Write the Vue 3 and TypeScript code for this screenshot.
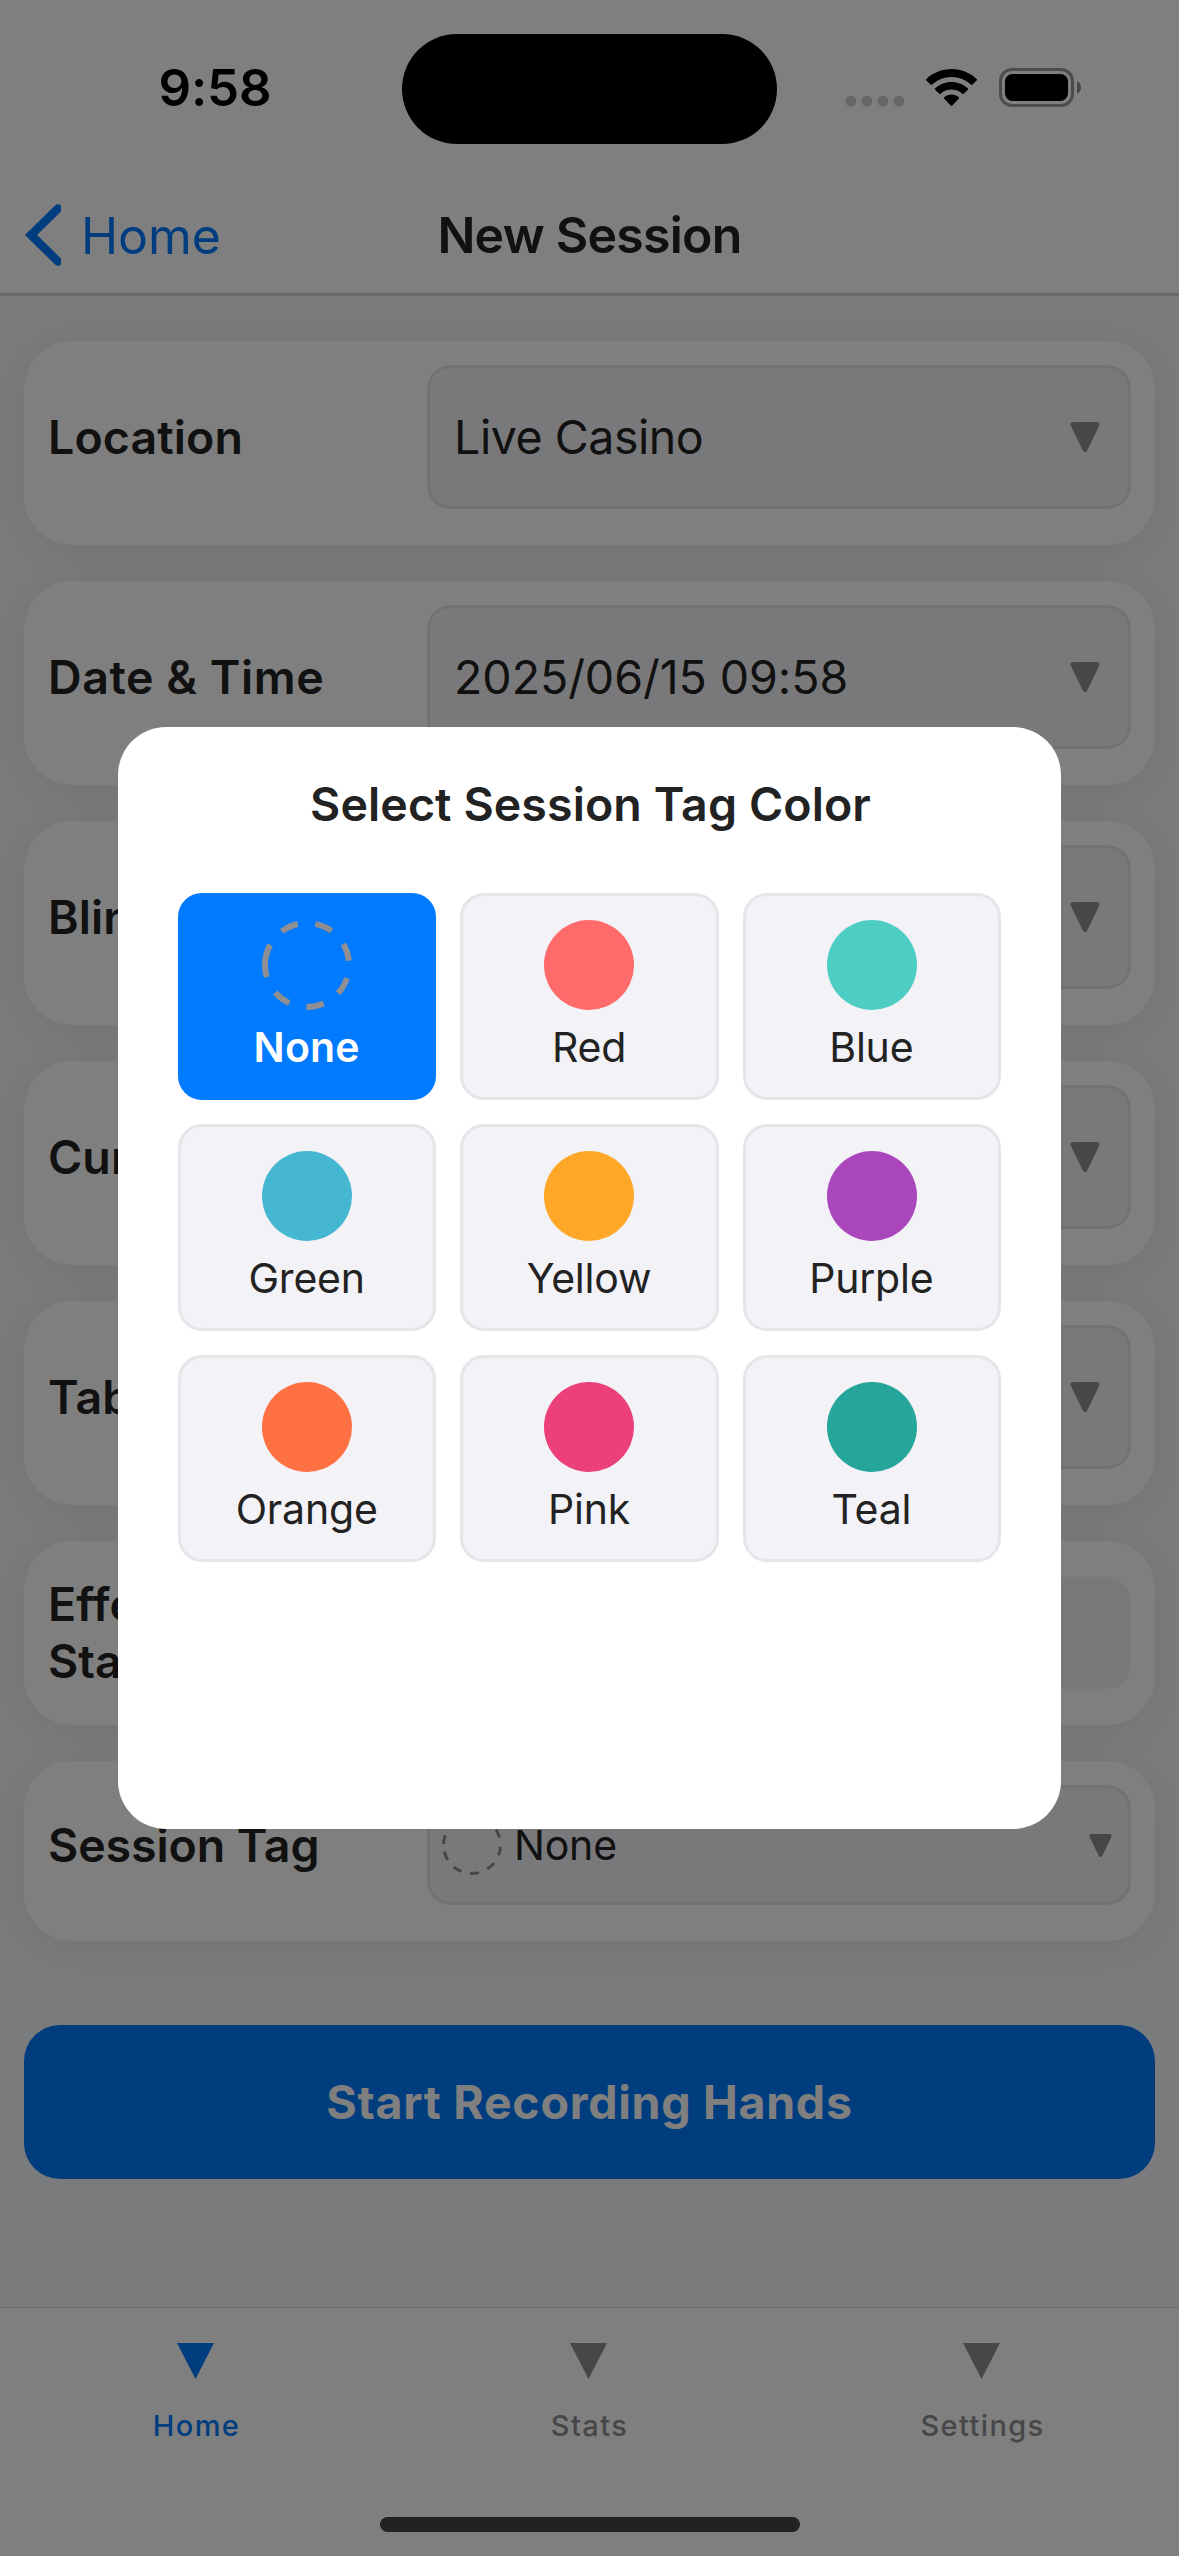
<script setup lang="ts">
interface Field {
  label: string
  value: string
  kind: 'select' | 'input' | 'tag'
  wide?: boolean
}

interface TagColor {
  name: string
  color: string | null
}

const fields: Field[] = [
  { label: 'Location', value: 'Live Casino', kind: 'select' },
  { label: 'Date & Time', value: '2025/06/15 09:58', kind: 'select', wide: true },
  { label: 'Blinds', value: '', kind: 'select' },
  { label: 'Currency', value: '', kind: 'select' },
  { label: 'Table Size', value: '', kind: 'select' },
  { label: 'Effective Stack', value: '', kind: 'input' },
  { label: 'Session Tag', value: 'None', kind: 'tag' },
]

const colors: TagColor[] = [
  { name: 'None', color: null },
  { name: 'Red', color: '#ff6b6b' },
  { name: 'Blue', color: '#4ecdc4' },
  { name: 'Green', color: '#45b7d1' },
  { name: 'Yellow', color: '#ffa726' },
  { name: 'Purple', color: '#ab47bc' },
  { name: 'Orange', color: '#ff7043' },
  { name: 'Pink', color: '#ec407a' },
  { name: 'Teal', color: '#26a69a' },
]

const selected = 'None'
const tabs: string[] = ['Home', 'Stats', 'Settings']
const activeTab = 'Home'
</script>

<template>
  <div class="screen">
    <div class="status">
      <div class="time">9:58</div>
      <div class="island"></div>
      <div class="indicators">
        <div class="dots"><i></i><i></i><i></i><i></i></div>
        <svg class="wifi" width="51" height="37" viewBox="0 0 51 37">
          <path d="M25.500 0C35.300 0 44.300 3.800 50.600 10.100a1 1 0 0 1 0 1.500l-4.100 4a1 1 0 0 1-1.500 0A28 28 0 0 0 25.500 7.900 28 28 0 0 0 6 15.600a1 1 0 0 1-1.500 0l-4.100-4a1 1 0 0 1 0-1.500C6.700 3.800 15.700 0 25.500 0Z" />
          <path d="M25.500 12.900c6.300 0 12 2.400 16.300 6.300a1 1 0 0 1 0 1.500l-4.100 4a1 1 0 0 1-1.400 0 16 16 0 0 0-21.600 0 1 1 0 0 1-1.400 0l-4.100-4a1 1 0 0 1 0-1.500c4.300-3.900 10-6.300 16.300-6.300Z" />
          <path d="M25.500 25.600c2.800 0 5.300 1 7.200 2.600a1 1 0 0 1 0 1.500l-6.400 6.800a1 1 0 0 1-1.600 0l-6.400-6.800a1 1 0 0 1 0-1.500c1.900-1.600 4.400-2.600 7.200-2.600Z" />
        </svg>
        <svg class="battery" width="83" height="39" viewBox="0 0 83 39">
          <rect x="1.500" y="1.500" width="72" height="36" rx="11.500" fill="none" stroke="#999" stroke-width="3" />
          <rect x="6" y="6" width="63" height="27" rx="7.500" fill="#000" />
          <path d="M78 13.200c2.500 1 4 3.400 4 6.300s-1.500 5.300-4 6.300Z" fill="#8c8c8c" />
        </svg>
      </div>
    </div>

    <header class="nav">
      <div class="back">
        <svg width="37" height="62" viewBox="0 0 37 62">
          <path d="M34 4.500 7 31 34 57.500" fill="none" stroke="#007aff" stroke-width="8.500" stroke-linecap="round" />
        </svg>
        <span>Home</span>
      </div>
      <h1>New Session</h1>
      <div class="nav-side"></div>
    </header>
    <div class="nav-line"></div>

    <main class="form">
      <div v-for="f in fields" :key="f.label" class="card" :class="[f.kind, { wide: f.wide }]">
        <label>{{ f.label }}</label>
        <div class="control">
          <svg v-if="f.kind === 'tag'" class="ring" width="60" height="60" viewBox="0 0 60 60">
            <circle cx="30" cy="30" r="28.500" fill="none" stroke="#8e8e93" stroke-width="3" stroke-dasharray="9" transform="rotate(182 30 30)" />
          </svg>
          <span class="value">{{ f.value }}</span>
          <svg v-if="f.kind !== 'input'" class="caret" viewBox="0 0 30 30">
            <path d="M3 2.500h24L15 27.500Z" fill="#8e8e93" stroke="#8e8e93" stroke-width="5" stroke-linejoin="round" />
          </svg>
        </div>
      </div>
      <button class="start">Start Recording Hands</button>
    </main>

    <nav class="tabs">
      <div v-for="t in tabs" :key="t" class="tab" :class="{ active: t === activeTab }">
        <svg width="37" height="36" viewBox="0 0 37 36"><path d="M0 0h37L18.500 36Z" fill="currentColor" /></svg>
        <span>{{ t }}</span>
      </div>
    </nav>

    <div class="overlay">
      <section class="modal">
        <h2>Select Session Tag Color</h2>
        <div class="grid">
          <div v-for="c in colors" :key="c.name" class="cell" :class="{ selected: c.name === selected }">
            <div v-if="c.color" class="swatch" :style="{ background: c.color }"></div>
            <svg v-else width="90" height="90" viewBox="0 0 90 90">
              <circle cx="45" cy="45" r="42" fill="none" stroke="#8e8e93" stroke-width="6" stroke-dasharray="17.700" transform="rotate(184.700 45 45)" />
            </svg>
            <span>{{ c.name }}</span>
          </div>
        </div>
      </section>
      <div class="home-indicator"></div>
    </div>
  </div>
</template>

<style>
html,
body {
  margin: 0;
  background: #7a7b7d;
}
</style>

<style scoped>
.screen {
  position: relative;
  display: flex;
  flex-direction: column;
  width: 1179px;
  height: 2556px;
  overflow: hidden;
  box-sizing: border-box;
  background: #f5f7fa;
  color: #222;
  font-family: Inter, "Liberation Sans", sans-serif;
}
.screen * {
  box-sizing: border-box;
}
.screen svg {
  display: block;
  flex: none;
}
.status {
  display: grid;
  grid-template-columns: 402px 375px 402px;
  height: 177px;
  flex: none;
  align-items: start;
  background: #fff;
}
.time {
  padding: 58px 0 0 28px;
  text-align: center;
  color: #000;
  font-size: 51px;
  line-height: 60px;
  font-weight: 600;
  letter-spacing: -0.2px;
}
.island {
  height: 110.600px;
  margin-top: 33.700px;
  border-radius: 56px;
  background: #000;
}
.indicators {
  display: flex;
  align-items: flex-end;
  height: 107px;
  padding-left: 69px;
}
.dots {
  display: flex;
  gap: 6px;
  padding-bottom: 1px;
}
.dots i {
  width: 10px;
  height: 10px;
  border-radius: 4px;
  background: #ccc;
}
.wifi {
  margin: 0 22px 1px 22px;
}
.nav {
  display: flex;
  align-items: center;
  height: 116px;
  flex: none;
  padding: 0 24px;
  background: #fff;
}
.back,
.nav-side {
  display: flex;
  flex: 1;
  align-items: center;
}
.back {
  color: #007aff;
  font-size: 50px;
  line-height: 60px;
  letter-spacing: -0.1px;
}
.back span {
  margin-left: 20px;
  padding-top: 2px;
}
h1 {
  margin: 0;
  font-size: 50px;
  line-height: 60px;
  font-weight: 600;
  letter-spacing: -0.75px;
}
.nav-line {
  height: 3px;
  flex: none;
  background: linear-gradient(#c6c7ca, #dfe1e5);
}
.form {
  display: flex;
  flex: 1;
  flex-direction: column;
  gap: 36px;
  padding: 45px 24px 0;
}
.card {
  display: flex;
  align-items: center;
  flex: none;
  padding: 24px 24px 36px;
  border-radius: 48px;
  background: #fff;
  box-shadow: 0 6px 48px rgba(0, 0, 0, 0.08);
}
.card.input {
  padding-top: 36px;
}
.card label {
  width: 35%;
  padding-right: 100px;
  font-size: 46.5px;
  line-height: 57px;
  font-weight: 600;
  letter-spacing: 0.1px;
}
.card.wide label {
  letter-spacing: 0.55px;
}
.card.tag label {
  letter-spacing: -0.1px;
}
.input label {
  margin: -2px 0;
}
.select label,
.tag label {
  padding-right: 0;
  white-space: nowrap;
}
.control {
  display: flex;
  align-items: center;
  justify-content: space-between;
  width: 65%;
  height: 144px;
  padding: 0 27.500px 0 24px;
  border: 3px solid #e5e5ea;
  border-radius: 24px;
  background: #f2f2f7;
}
.input .control {
  height: 112px;
  border: 0;
}
.tag .control {
  height: 120px;
  padding: 0 16px 0 12px;
}
.value {
  font-size: 46.5px;
  line-height: 57px;
  letter-spacing: -0.45px;
}
.wide .value {
  letter-spacing: -0.05px;
}
.tag .value {
  flex: 1;
  margin-left: 12px;
  font-size: 41px;
  line-height: 50px;
  letter-spacing: -0.2px;
}
.caret {
  width: 30px;
  height: 30px;
}
.tag .caret {
  width: 23px;
  height: 23px;
}
.start {
  height: 154px;
  flex: none;
  margin: 48px 0 0;
  padding: 0;
  border: 0;
  border-radius: 36px;
  background: #007aff;
  color: #fff;
  font-family: inherit;
  font-size: 46.5px;
  line-height: 57px;
  font-weight: 700;
  letter-spacing: 0.72px;
}
.tabs {
  display: flex;
  height: 249px;
  flex: none;
  border-top: 1px solid #d5d6da;
  background: #fff;
}
.tab {
  display: flex;
  flex: 1;
  flex-direction: column;
  align-items: center;
  gap: 29px;
  padding-top: 35px;
  color: #8e8e93;
  font-size: 29px;
  line-height: 36px;
  font-weight: 500;
  letter-spacing: 1.4px;
}
.tab svg {
  margin-right: 2px;
}
.tab.active {
  color: #007aff;
}
.overlay {
  position: absolute;
  inset: 0;
  display: flex;
  align-items: center;
  justify-content: center;
  background: rgba(0, 0, 0, 0.5);
}
.modal {
  width: 943px;
  height: 1102px;
  padding: 48px 60px;
  border-radius: 48px;
  background: #fff;
}
h2 {
  margin: 0 0 60px;
  padding-left: 2px;
  text-align: center;
  font-size: 46.5px;
  line-height: 58px;
  font-weight: 600;
  letter-spacing: 0.1px;
}
.grid {
  display: grid;
  grid-template-columns: repeat(3, 1fr);
  gap: 24px;
}
.cell {
  display: flex;
  flex-direction: column;
  align-items: center;
  height: 207px;
  padding-top: 24px;
  border: 3px solid #e5e5ea;
  border-radius: 24px;
  background: #f2f2f7;
  font-size: 41px;
  line-height: 51px;
  letter-spacing: -0.2px;
}
.cell span {
  margin-top: 12px;
  padding-right: 1px;
}
.cell.selected {
  border-color: #007aff;
  background: #007aff;
  color: #fff;
  font-weight: 600;
  letter-spacing: 0.2px;
}
.swatch {
  width: 90px;
  height: 90px;
  flex: none;
  border-radius: 50%;
}
.home-indicator {
  position: absolute;
  bottom: 24px;
  left: 380px;
  width: 420px;
  height: 15px;
  border-radius: 8px;
  background: #222;
}
</style>
